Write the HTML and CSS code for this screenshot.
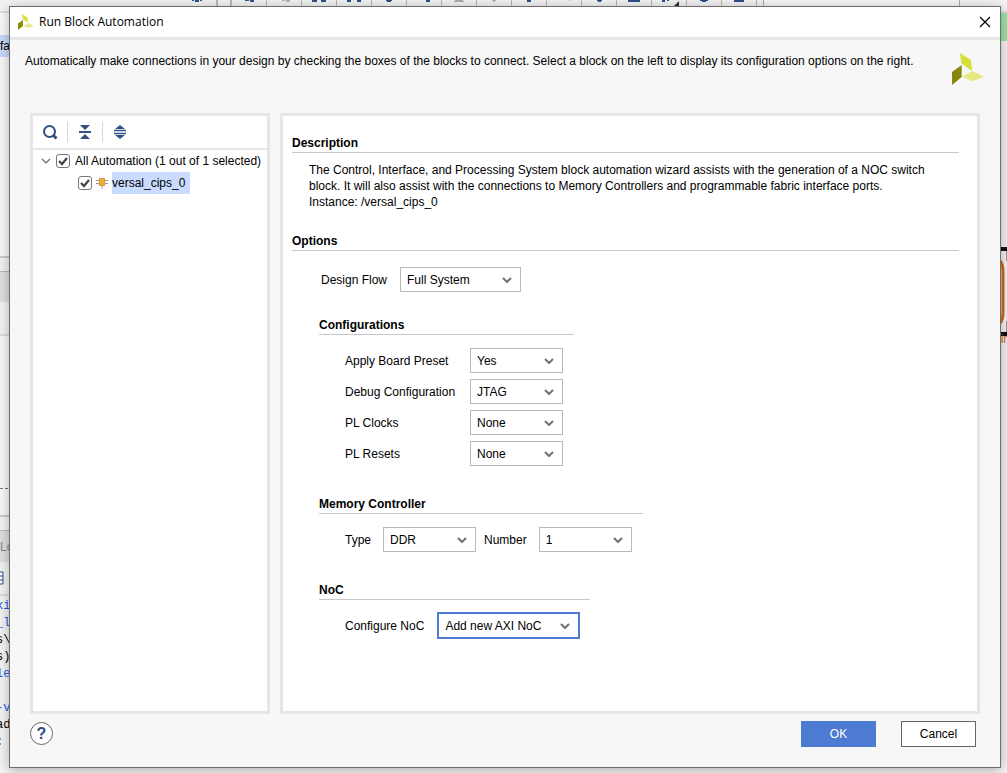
FILE: index.html
```
<!DOCTYPE html>
<html lang="en">
<head>
  <meta charset="UTF-8">
  <meta name="viewport" content="width=device-width, initial-scale=1.0">
  <title>Run Block Automation</title>
  <link rel="stylesheet" href="styles.css">
</head>
<body>
  <!-- main window, mostly covered by the dialog -->
  <div class="app" aria-hidden="true">
    <div class="app-toolbar">
      <div class="tool-group tool-group-left"><svg width="14" height="3"><path d="M2 0h2v1H2zM10 0h2v1h-2zM5 0h4v2H5z" fill="#2f4f86"/></svg></div>
      <div class="tool-group">
        <span class="tool"><svg width="14" height="3"><path d="M3 0h4v1H3zM8 0h4v2H8z" fill="#2f4f86"/></svg></span>
        <span class="tool"><svg width="14" height="3"><path d="M5 0h3v1H5zM9 0h4v2H9z" fill="#b5b5b5"/></svg></span>
        <span class="tool"><svg width="14" height="3"><path d="M0 0h5v2H0zM9 0h5v2H9z" fill="#2f4f86"/></svg></span>
        <span class="tool"><svg width="14" height="3"><path d="M0 0h4v2H0zM10 0h4v2h-4z" fill="#2f4f86"/></svg></span>
        <span class="tool"><svg width="14" height="3"><path d="M4 0h6v1H4zM5 1h4v1H5z" fill="#2f4f86"/></svg></span>
        <span class="tool"><svg width="14" height="3"><path d="M9 0h4v2H9z" fill="#2f4f86"/></svg></span>
        <span class="tool"><svg width="14" height="3"><path d="M3 0h8v1h1v1H2V1h1z" fill="#aaa"/></svg></span>
        <span class="tool"><svg width="14" height="3"><path d="M5 0h4v1H5zM6 1h2v1H6z" fill="#b5b5b5"/></svg></span>
        <span class="tool"><svg width="14" height="3"><path d="M5 0h4v2H5z" fill="#2f4f86"/></svg></span>
        <span class="tool"><svg width="14" height="3"><path d="M12 0h1v1h-1z" fill="#b5b5b5"/></svg></span>
        <span class="tool"><svg width="14" height="3"><path d="M5 0h5v1H9v1H6V1H5z" fill="#2f4f86"/></svg></span>
        <span class="tool"><svg width="14" height="3"><path d="M1 0h12v2H1z" fill="#2f4f86"/></svg></span>
        <span class="tool"><svg width="20" height="6"><path d="M3 0h3v2H3zM8 0h2v1H8z" fill="#2f4f86"/><path d="M20 1v5h-5z" fill="#333"/></svg></span>
        <span class="tool"><svg width="14" height="3"><path d="M3 0h8v1H9v1H5V1H3z" fill="#2f4f86"/></svg></span>
        <span class="tool"><svg width="14" height="3"><path d="M2 0h10v2H2z" fill="#2f4f86"/></svg></span>
      </div>
      <div class="tool-combo"></div>
    </div>
    <div class="app-body">
      <div class="app-left">
        <div class="source-pane"><div class="source-selected">fa</div></div>
        <div class="pane-gap"></div>
        <div class="props-tab"></div>
        <div class="props-head"></div>
        <div class="props-pane"><div class="dashes"></div></div>
        <div class="pane-gap"></div>
        <div class="log-tab">Lo</div>
        <div class="log-tools"><svg width="4" height="14"><path d="M-1 1h4v12h-4M0 5h3M0 9h3" fill="#fff" stroke="#2f4f86"/></svg></div>
        <pre class="log"><span class="log-link">xi
_l</span>
s\
s)
<span class="log-link">le

-v</span>
ad
:</pre>
      </div>
      <div class="app-right">
        <div class="ready-bar"></div>
        <div class="canvas">
          <svg width="14" height="110">
            <path d="M0 5h14M0 90h14" stroke="#111" stroke-width="4"/>
            <path d="M0 14Q10 14 10 28V68Q10 82 0 82" fill="none" stroke="#d2691e" stroke-width="3"/>
            <path d="M14 7v10M14 77v11" stroke="#999" stroke-width="2"/>
          </svg>
          <span class="canvas-label">in</span>
        </div>
      </div>
    </div>
  </div>

  <div class="dialog" role="dialog" aria-labelledby="dialog-title">
    <header class="titlebar">
      <svg class="titlebar-logo" viewBox="0 0 32 32"><path d="M8 0L19 7L20 18L9 10Z" fill="#dbe04c"/><path d="M0 19L10 12V24L0 32Z" fill="#8a8c0c"/><path d="M10 24L21 18L32 24L21 28Z" fill="#e5e996"/></svg>
      <h1 id="dialog-title">Run Block Automation</h1>
      <button class="close" type="button" aria-label="Close">
        <svg width="12" height="12" viewBox="0 0 12 12"><path d="M1 1L11 11M11 1L1 11" stroke="#000" stroke-width="1.2"/></svg>
      </button>
    </header>

    <div class="intro">
      <p>Automatically make connections in your design by checking the boxes of the blocks to connect. Select a block on the left to display its configuration options on the right.</p>
      <svg class="intro-logo" viewBox="0 0 32 32"><path d="M8 0L19 7L20 18L9.4 10.3Z" fill="#d6de37"/><path d="M0 19L9.7 12V24L0 32Z" fill="#86870b"/><path d="M10 23.7L20.7 18L32 23.7L20.7 28.3Z" fill="#e5ea80"/></svg>
    </div>

    <div class="panels">
      <section class="panel tree-panel">
        <div class="tree-toolbar">
          <button type="button" aria-label="Search">
            <svg width="16" height="16" viewBox="0 0 16 16"><circle cx="7.5" cy="7.5" r="5.5" fill="none" stroke="#2f4f86" stroke-width="2"/><path d="M11 11L14.500 14.500" stroke="#2f4f86" stroke-width="3"/></svg>
          </button>
          <button type="button" aria-label="Collapse all">
            <svg width="16" height="16" viewBox="0 0 16 16"><path d="M3 1H13L8 6ZM3 15H13L8 10Z" fill="#2f4f86"/><path d="M2 8H14" stroke="#2f4f86" stroke-width="2"/></svg>
          </button>
          <button type="button" aria-label="Expand all">
            <svg width="16" height="16" viewBox="0 0 16 16"><path d="M3 5L8 1L13 5ZM3 11L8 15L13 11Z" fill="#2f4f86"/><path d="M2 6.5H14M2 9.5H14" stroke="#2f4f86" stroke-width="1.6"/></svg>
          </button>
        </div>
        <div class="tree">
          <div class="tree-row">
            <svg class="twisty" width="10" height="6" viewBox="0 0 10 6"><path d="M1 1L5 5L9 1" fill="none" stroke="#666" stroke-width="1.2"/></svg>
            <input type="checkbox" id="all" checked>
            <label for="all">All Automation (1 out of 1 selected)</label>
          </div>
          <div class="tree-row tree-child">
            <input type="checkbox" id="cips" checked>
            <svg class="block-icon" width="12" height="12" viewBox="0 0 12 12"><path d="M0 3.5H12M0 6.5H12M6 8V12" stroke="#999" stroke-width="1"/><path d="M3.5 1.5H8.5V8.5H3.5Z" fill="#f9ae2b" stroke="#d0954a"/></svg>
            <label class="selected" for="cips">versal_cips_0</label>
          </div>
        </div>
      </section>

      <section class="panel detail-panel">
        <h2>Description</h2>
        <p class="description">The Control, Interface, and Processing System block automation wizard assists with the generation of a NOC switch block. It will also assist with the connections to Memory Controllers and programmable fabric interface ports.<br>Instance: /versal_cips_0</p>

        <h2>Options</h2>
        <div class="field design-flow">
          <label for="flow">Design Flow</label>
          <select id="flow" class="wide"><option>Full System</option></select>
        </div>

        <div class="group">
          <h3 class="rule-config">Configurations</h3>
          <div class="config-grid">
            <label for="preset">Apply Board Preset</label>
            <select id="preset"><option>Yes</option><option>No</option></select>
            <label for="debug">Debug Configuration</label>
            <select id="debug"><option>JTAG</option></select>
            <label for="clocks">PL Clocks</label>
            <select id="clocks"><option>None</option></select>
            <label for="resets">PL Resets</label>
            <select id="resets"><option>None</option></select>
          </div>
        </div>

        <div class="group">
          <h3 class="rule-memory">Memory Controller</h3>
          <div class="field memory-field">
            <label for="type">Type</label>
            <select id="type"><option>DDR</option></select>
            <label for="number">Number</label>
            <select id="number"><option>1</option></select>
          </div>
        </div>

        <div class="group">
          <h3 class="rule-noc">NoC</h3>
          <div class="field">
            <label for="noc">Configure NoC</label>
            <select id="noc" class="focused"><option>Add new AXI NoC</option></select>
          </div>
        </div>
      </section>
    </div>

    <footer class="buttons">
      <button class="help" type="button" aria-label="Help">?</button>
      <button class="ok" type="button">OK</button>
      <button class="cancel" type="button">Cancel</button>
    </footer>
  </div>
</body>
</html>
```
FILE: styles.css
```
* {
  box-sizing: border-box;
}

body {
  font-family: "Liberation Sans", Arial, sans-serif;
  font-size: 12px;
  line-height: 16px;
  color: #000;
  background: #f4f4f4;
  margin: 0;
  height: 100vh;
  position: relative;
  overflow: hidden;
}

h1, h2, h3, p, pre {
  margin: 0;
}

button {
  font: inherit;
  padding: 0;
  border: 0;
  background: none;
}

svg {
  display: block;
  flex: none;
}

/* window behind */
.app {
  height: 100vh;
  display: flex;
  flex-direction: column;
  overflow: hidden;
}

.app-toolbar {
  display: flex;
  height: 13px;
  flex: none;
  border-bottom: 2px solid #ddd;
}

.tool-group {
  display: flex;
  border-left: 2px solid #bbb;
}

.tool-group-left {
  width: 218px;
  margin-right: 12px;
  padding-right: 12px;
  justify-content: flex-end;
  border-left: 0;
  border-right: 2px solid #bbb;
}

.tool {
  width: 35px;
  display: flex;
  justify-content: center;
  border-right: 1px solid #bbb;
}

.tool-combo {
  width: 197px;
  margin-left: 6px;
  background: #f8f8f8;
  border: solid #aaa;
  border-width: 0 1px;
}

.app-body {
  flex: 1;
  display: flex;
  justify-content: space-between;
}

.app-left {
  width: 50%;
  display: flex;
  flex-direction: column;
}

.source-pane {
  height: 243px;
  padding-top: 22px;
  background: #fafafa;
}

.source-selected {
  height: 22px;
  line-height: 22px;
  background: #c9dcff;
}

.pane-gap {
  height: 16px;
  border-top: 2px solid #ccc;
  border-bottom: 1px solid #bbb;
}

.props-tab {
  height: 30px;
  background: #e0e0e0;
}

.props-head {
  height: 34px;
  border-bottom: 2px solid #ddd;
}

.props-pane {
  height: 179px;
  padding-top: 152px;
  background: #fafafa;
}

.dashes {
  border-top: 1px dashed #777;
}

.log-tab {
  height: 31px;
  line-height: 32px;
  color: #888;
  background: #e0e0e0;
}

.log-tools {
  height: 34px;
  padding-top: 9px;
  border-bottom: 2px solid #ddd;
}

.log {
  flex: 1;
  margin-left: -4px;
  padding-top: 2px;
  font-family: "Liberation Mono", "Courier New", monospace;
  line-height: 17px;
}

.log-link {
  color: #1a5fe0;
}

.app-right {
  width: 14px;
}

.ready-bar {
  height: 28px;
  background: #98e8a4;
}

.canvas {
  height: 100%;
  padding-top: 203px;
  position: relative;
}

.canvas-label {
  position: absolute;
  top: 290px;
  right: -3px;
  color: #d2691e;
}

/* dialog */
.dialog {
  position: absolute;
  inset: 6px 6px 5px 9px;
  display: flex;
  flex-direction: column;
  background: #f7f7f7;
  border: 1px solid #6e6e6e;
  box-shadow: 0 2px 12px rgba(0, 0, 0, 0.3);
}

.titlebar {
  display: flex;
  align-items: center;
  gap: 5px;
  height: 33px;
  padding: 0 9px 0 8px;
  background: #fff;
  border-bottom: 3px solid #e6e6e6;
}

.titlebar-logo {
  width: 16px;
  height: 16px;
}

.titlebar h1 {
  flex: 1;
  font: 12px/16px "Open Sans", "Segoe UI", sans-serif;
}

.intro {
  display: flex;
  justify-content: space-between;
  height: 73px;
  padding: 13px 16px 0 15px;
}

.intro-logo {
  width: 32px;
  height: 32px;
}

.panels {
  flex: 1;
  display: flex;
  gap: 10px;
  padding: 0 20px;
}

.panel {
  background: #fff;
  border: 3px solid #e6e6e6;
}

.tree-panel {
  width: 240px;
  flex: none;
}

.tree-toolbar {
  display: flex;
  align-items: center;
  height: 34px;
  border-bottom: 2px solid #e6e6e6;
}

.tree-toolbar button {
  width: 34px;
  height: 20px;
  display: flex;
  align-items: center;
  justify-content: center;
}

.tree-toolbar button + button {
  width: 35px;
  border-left: 1px solid #d6d6d6;
}

.tree-row {
  display: flex;
  align-items: center;
  height: 22px;
  padding-left: 8px;
  white-space: nowrap;
}

.tree-child {
  padding-left: 45px;
}

.tree-row input {
  appearance: none;
  flex: none;
  width: 14px;
  height: 14px;
  margin: 0 5px;
  border: 1px solid #777;
  border-radius: 3px;
  background: #fff;
}

.tree-row input:checked {
  background: #fff url("data:image/svg+xml,%3Csvg xmlns='http://www.w3.org/2000/svg' viewBox='0 0 12 12'%3E%3Cpath d='M2 6L5 9L10 3' fill='none' stroke='%23444' stroke-width='2.2'/%3E%3C/svg%3E") center / 12px no-repeat;
}

.tree-child input {
  margin: 0 4px 0 0;
}

.block-icon {
  margin-right: 4px;
}

.selected {
  height: 22px;
  line-height: 22px;
  padding-right: 5px;
  background: #c9dcff;
}

.detail-panel {
  flex: 1;
  padding: 18px 18px 0 9px;
}

.detail-panel h2,
.detail-panel h3 {
  font-size: 12px;
  line-height: 18px;
  border-bottom: 1px solid #c8c8c8;
}

.description {
  padding: 9px 0 22px 17px;
}

.field {
  display: flex;
  align-items: center;
  gap: 13px;
  padding-left: 26px;
}

.design-flow {
  margin: 16px 0 24px;
  padding-left: 29px;
}

.memory-field {
  gap: 12px;
}

.memory-field select + label {
  margin-left: -4px;
}

.group {
  margin: 0 0 29px 27px;
}

.group h3 {
  margin-bottom: 13px;
}

.group .rule-config {
  width: 255px;
}

.group .rule-memory {
  width: 324px;
}

.group .rule-noc {
  width: 271px;
  margin-bottom: 12px;
}

.config-grid {
  display: grid;
  grid-template-columns: 125px 93px;
  align-items: center;
  row-gap: 6px;
  padding-left: 26px;
}

select {
  appearance: none;
  width: 93px;
  height: 25px;
  padding: 0 6px;
  font: inherit;
  color: #000;
  border: 1px solid #b8b8b8;
  border-radius: 0;
  background: #fff url("data:image/svg+xml,%3Csvg xmlns='http://www.w3.org/2000/svg' viewBox='0 0 10 6'%3E%3Cpath d='M1 1L5 5L9 1' fill='none' stroke='%23707070' stroke-width='2'/%3E%3C/svg%3E") right 8px center / 10px 6px no-repeat;
}

select.wide {
  width: 121px;
}

select.focused {
  width: 143px;
  height: 27px;
  border: 2px solid #4d7bd1;
}

.buttons {
  display: flex;
  align-items: center;
  height: 53px;
  padding: 0 24px 14px 20px;
}

.help {
  width: 23px;
  height: 23px;
  margin-right: auto;
  border: 1px solid #666;
  border-radius: 50%;
  background: #fff;
  color: #2f4f86;
  font-size: 16px;
  font-weight: bold;
  line-height: 20px;
}

.ok,
.cancel {
  width: 75px;
  height: 26px;
}

.ok {
  margin-right: 25px;
  background: #4d7bd1;
  color: #fff;
}

.cancel {
  background: #fff;
  border: 1px solid #666;
}
```
